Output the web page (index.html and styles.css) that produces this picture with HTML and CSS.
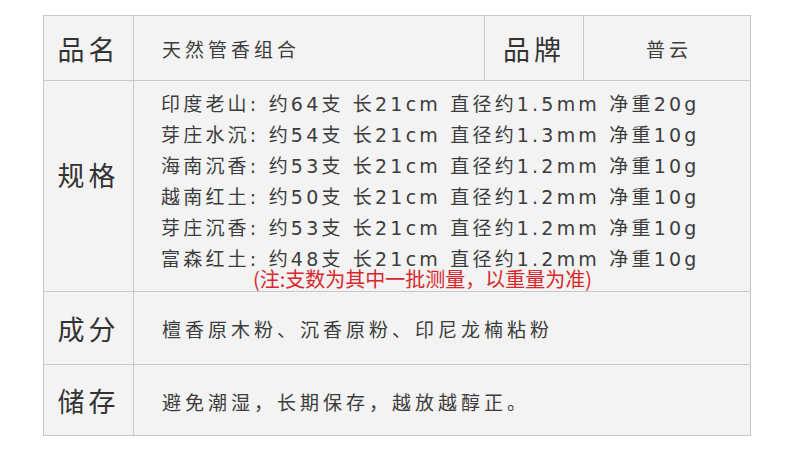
FILE: index.html
```html
<!DOCTYPE html>
<html lang="zh">
<head>
<meta charset="utf-8">
<link rel="stylesheet" href="styles.css">
</head>
<body>
<div class="table">
  <div class="cell label">品名</div>
  <div class="cell value name">天然管香组合</div>
  <div class="cell label brand">品牌</div>
  <div class="cell value brand-val">普云</div>

  <div class="cell label spec-label">规格</div>
  <div class="cell span spec">
    <div class="line">印度老山: 约64支 长21cm 直径约1.5mm 净重20g</div>
    <div class="line">芽庄水沉: 约54支 长21cm 直径约1.3mm 净重10g</div>
    <div class="line">海南沉香: 约53支 长21cm 直径约1.2mm 净重10g</div>
    <div class="line">越南红土: 约50支 长21cm 直径约1.2mm 净重10g</div>
    <div class="line">芽庄沉香: 约53支 长21cm 直径约1.2mm 净重10g</div>
    <div class="line">富森红土: 约48支 长21cm 直径约1.2mm 净重10g</div>
    <div class="note">(注:支数为其中一批测量，以重量为准)</div>
  </div>

  <div class="cell label">成分</div>
  <div class="cell span value">檀香原木粉、沉香原粉、印尼龙楠粘粉</div>

  <div class="cell label">储存</div>
  <div class="cell span value store">避免潮湿，长期保存，越放越醇正。</div>
</div>
</body>
</html>
```
FILE: styles.css
```css
html, body {
  margin: 0;
  padding: 0;
  background: #ffffff;
}
body {
  font-family: "Noto Sans CJK SC", "Noto Sans", sans-serif;
  color: #3c3c3c;
  padding: 15px 0 0 43px;
}
.table {
  display: grid;
  grid-template-columns: 90px 351px 99px 167px;
  grid-template-rows: 65px 211px 73px 71px;
  width: 708px;
  box-sizing: border-box;
  border-top: 1px solid #c8c8c8;
  border-left: 1px solid #c8c8c8;
  background: #f3f3f3;
}
.cell {
  border-right: 1px solid #c8c8c8;
  border-bottom: 1px solid #c8c8c8;
  display: flex;
  align-items: center;
}
.label {
  justify-content: center;
  font-size: 27px;
  letter-spacing: 4px;
  color: #333;
}
.value {
  font-size: 19px;
  letter-spacing: 4px;
  padding-left: 28px;
}
.brand-val {
  justify-content: center;
  padding-left: 4px;
}
.span {
  grid-column: 2 / span 3;
}
.spec-label {
  padding-bottom: 24px;
}
.spec {
  flex-direction: column;
  align-items: flex-start;
  justify-content: flex-start;
  padding: 8px 0 0 27px;
  font-family: "DejaVu Sans", "Noto Sans CJK SC", sans-serif;
  font-size: 19px;
  letter-spacing: 3.2px;
}
.line {
  line-height: 31px;
  white-space: nowrap;
}
.note {
  align-self: flex-start;
  margin: -7px 0 0 92px;
  color: #d8262a;
  font-family: "Noto Sans CJK SC", sans-serif;
  font-size: 20px;
  letter-spacing: 0;
  line-height: 22px;
}
.store {
  padding-top: 3px;
}
```
